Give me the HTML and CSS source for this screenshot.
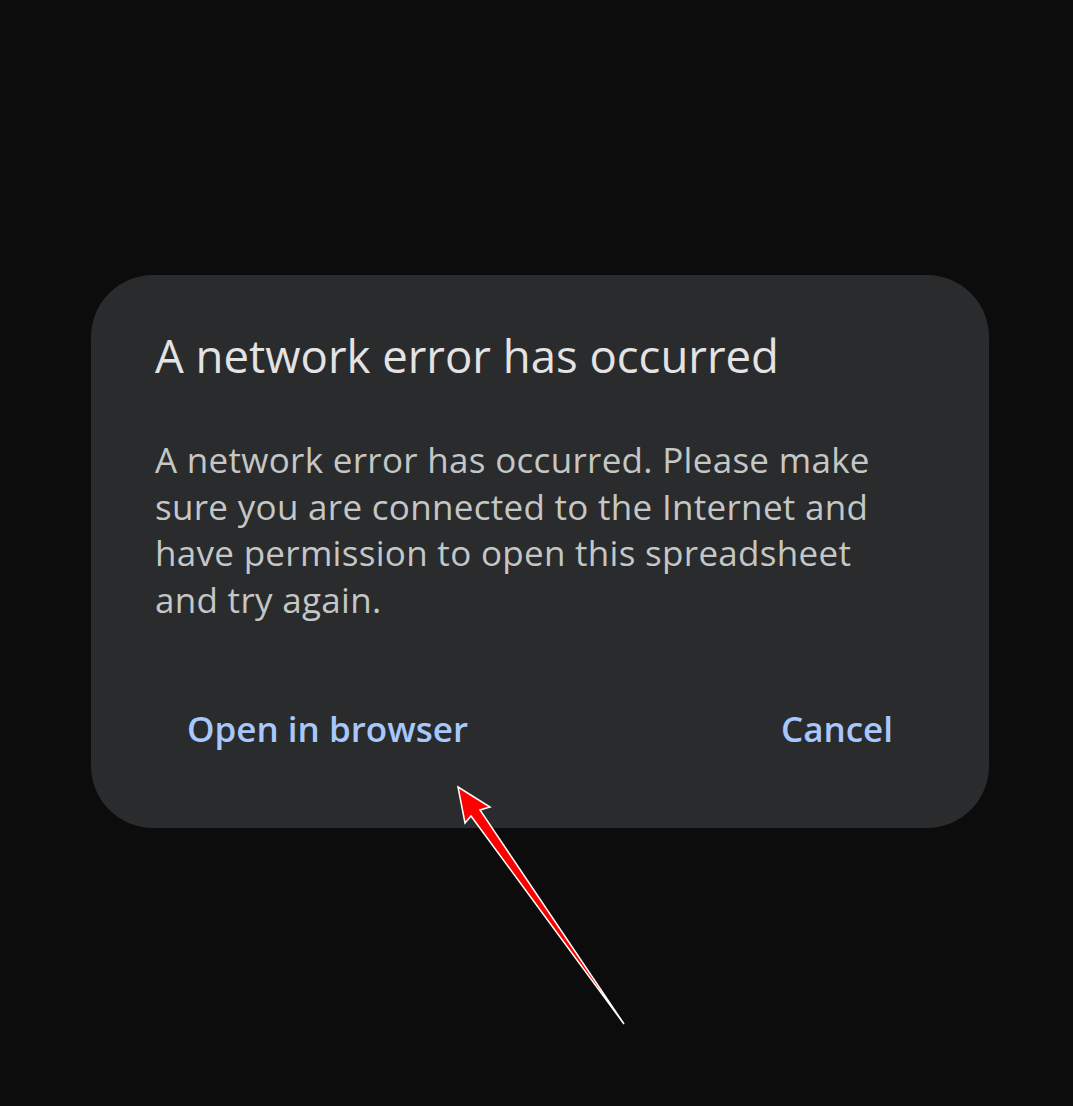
FILE: index.html
```html
<!DOCTYPE html>
<html>
<head>
<meta charset="utf-8">
<link rel="stylesheet" href="styles.css">
</head>
<body>
<div class="screen">
  <div class="dialog">
    <h1 class="title">A network error has occurred</h1>
    <p class="message">A network error has occurred. Please make sure you are connected to the Internet and have permission to open this spreadsheet and try again.</p>
    <div class="actions">
      <span class="btn">Open in browser</span>
      <span class="btn">Cancel</span>
    </div>
  </div>
  <svg class="arrow" width="1073" height="1106" viewBox="0 0 1073 1106">
    <path d="M458 787 L490 807 L480 810 L624 1024 L471 816 L465 823 Z" fill="#ff0000" stroke="#ffffff" stroke-width="1.5" stroke-linejoin="miter"/>
  </svg>
</div>
</body>
</html>
```
FILE: styles.css
```css
html, body {
  margin: 0;
  padding: 0;
  background: #0c0c0c;
}
.screen {
  position: relative;
  width: 1073px;
  height: 1106px;
  padding-top: 275px;
  box-sizing: border-box;
  font-family: "Open Sans", Roboto, sans-serif;
}
.dialog {
  margin-left: 91px;
  width: 898px;
  height: 553px;
  box-sizing: border-box;
  background: #2a2b2d;
  border-radius: 62px;
  padding: 52px 64px 0 64px;
}
.title {
  margin: 0;
  font-weight: 400;
  font-size: 45.5px;
  line-height: 56px;
  color: #e3e3e3;
}
.message {
  margin: 54px 0 0 0;
  font-size: 35px;
  line-height: 46.5px;
  letter-spacing: 0.3px;
  color: #c4c7c5;
  width: 740px;
}
.actions {
  display: flex;
  justify-content: space-between;
  margin-top: 83px;
  padding: 0 32px 0 32px;
}
.btn {
  font-size: 35px;
  font-weight: 600;
  color: #a8c7fa;
  line-height: 46px;
}
.arrow {
  position: absolute;
  left: 0;
  top: 0;
}
```
